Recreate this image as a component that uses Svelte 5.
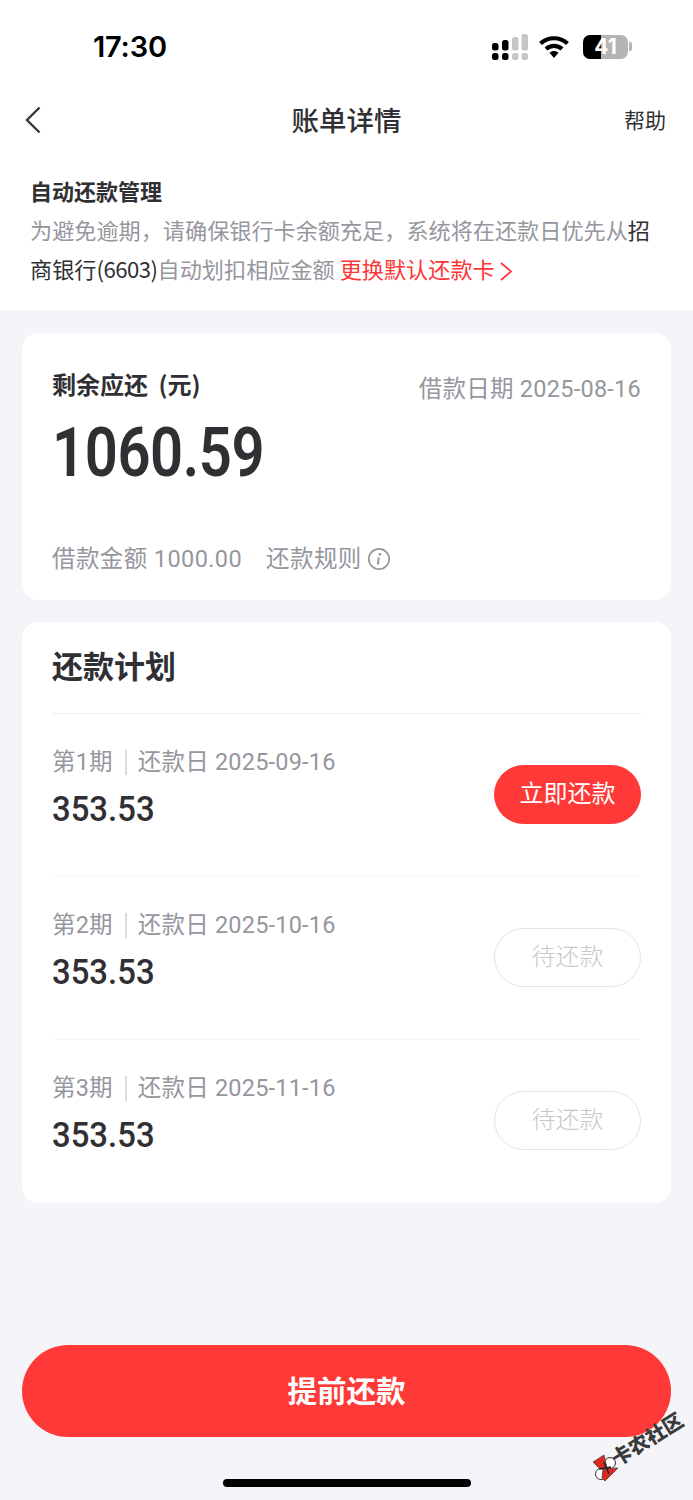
<script>
  const plans = [
    { n: 1, date: '2025-09-16', active: true },
    { n: 2, date: '2025-10-16', active: false },
    { n: 3, date: '2025-11-16', active: false }
  ];
</script>

<div class="page">
  <section class="top">
    <div class="status">
      <span class="time">17:30</span>
      <div class="status-icons">
        <svg width="36" height="26" viewBox="0 0 36 26" class="cell">
          <g fill="#000">
            <rect x="0" y="9" width="6.5" height="7.5" rx="2.5"/>
            <rect x="0" y="19" width="6.5" height="7" rx="2.5"/>
            <rect x="10" y="6" width="6.5" height="10.5" rx="2.5"/>
            <rect x="10" y="19" width="6.5" height="7" rx="2.5"/>
          </g>
          <g fill="#c6c6c6">
            <rect x="20" y="3" width="6.5" height="13.5" rx="2.5"/>
            <rect x="20" y="19" width="6.5" height="7" rx="2.5"/>
            <rect x="29.5" y="0" width="6.5" height="16.5" rx="2.5"/>
            <rect x="29.5" y="19" width="6.5" height="7" rx="2.5"/>
          </g>
        </svg>
        <svg width="32" height="24" viewBox="0 0 32 24" class="wifi">
          <path d="M2.5 8.5C10 1.5 22 1.500 29.500 8.500" fill="none" stroke="#000" stroke-width="4.200"/>
          <path d="M8 14C12.500 9.800 19.500 9.800 24 14" fill="none" stroke="#000" stroke-width="4.200"/>
          <path d="M11.500 17.800C14.200 15.300 17.800 15.300 20.500 17.800L16 23Z" fill="#000"/>
        </svg>
        <div class="battery">
          <span class="level"></span>
          <span class="pct">41</span>
        </div>
        <span class="nub"></span>
      </div>
    </div>

    <header class="nav">
      <svg width="18" height="28" viewBox="0 0 18 28" class="back">
        <path d="M15.500 1.500L3 14L15.500 26.500" fill="none" stroke="#333" stroke-width="2.300"/>
      </svg>
      <h1>账单详情</h1>
      <span class="help">帮助</span>
    </header>

    <div class="notice">
      <div class="notice-title">自动还款管理</div>
      <p class="line">为避免逾期，请确保银行卡余额充足，系统将在还款日优先从<span class="dark">招</span></p>
      <p class="line"><span class="dark">商银行</span><span class="dark card-no">(6603)</span><span>自动划扣相应金额</span> <span class="red">更换默认还款卡</span><svg width="14" height="19" viewBox="0 0 14 19" class="chev"><path d="M2 1L12 9.500L2 18" fill="none" stroke="#ff3535" stroke-width="1.700"/></svg></p>
    </div>
  </section>

  <section class="card summary">
    <div class="summary-head">
      <div class="remain">剩余应还 (元)</div>
      <div class="loan-date">借款日期 2025-08-16</div>
    </div>
    <div class="amount">1060.59</div>
    <div class="summary-foot">
      <span>借款金额 1000.00</span>
      <span class="rule">还款规则
        <svg width="24" height="24" viewBox="0 0 24 24" class="info">
          <circle cx="12" cy="12" r="10.200" fill="none" stroke="#96969e" stroke-width="1.700"/>
          <circle cx="13" cy="7.300" r="1.300" fill="#96969e"/>
          <path d="M11.800 10.500L10.800 17.500" stroke="#96969e" stroke-width="2" fill="none"/>
        </svg>
      </span>
    </div>
  </section>

  <section class="card plan">
    <h2>还款计划</h2>
    {#each plans as p}
      <div class="row">
        <div class="row-text">
          <div class="row-meta">
            <span>第{p.n}期</span><i class="sep"></i><span>还款日 {p.date}</span>
          </div>
          <div class="row-amount">353.53</div>
        </div>
        <span class="pill" class:active={p.active}>{p.active ? '立即还款' : '待还款'}</span>
      </div>
    {/each}
  </section>

  <div class="spacer"></div>
  <button class="prepay">提前还款</button>
  <div class="home"></div>

  <svg class="logo" width="27" height="28" viewBox="0 0 27 28">
    <circle cx="18" cy="9" r="5.500" fill="#fff" stroke="#333" stroke-width="1"/>
    <circle cx="9" cy="20" r="5.500" fill="#fff" stroke="#333" stroke-width="1"/>
    <path d="M1 8L12 1L15 14L8 15Z" fill="#e0261f" stroke="#444" stroke-width=".8"/>
    <path d="M11 15L26 14L13 27L10 24Z" fill="#e0261f" stroke="#444" stroke-width=".8"/>
    <path d="M12 8L17 20M7 15L19 13" stroke="#222" stroke-width="1.500" fill="none"/>
  </svg>
  <span class="mark">卡农社区</span>
</div>

<style>
  :global(body) {
    margin: 0;
    background: #f4f4f9;
  }
  .page {
    position: relative;
    width: 693px;
    height: 1500px;
    overflow: hidden;
    background: #f4f4f9;
    display: flex;
    flex-direction: column;
    align-items: center;
    font-family: "Noto Sans CJK SC", "Noto Sans", sans-serif;
    color: #303034;
  }
  .top {
    width: 100%;
    height: 310px;
    background: #fff;
    flex: none;
    box-sizing: border-box;
  }
  .status {
    height: 92px;
    box-sizing: border-box;
    padding: 27px 61px 0 93px;
    display: flex;
    justify-content: space-between;
  }
  .time {
    font-family: Inter, Roboto, sans-serif;
    font-size: 29px;
    line-height: 40px;
    font-weight: 600;
    color: #000;
    letter-spacing: -0.2px;
  }
  .status-icons {
    display: flex;
    align-items: flex-start;
    padding-top: 7px;
  }
  .cell { margin-right: 10px; }
  .wifi { margin-right: 13px; margin-top: 1px; }
  .battery {
    position: relative;
    width: 45px;
    height: 24px;
    margin-top: 1px;
    border-radius: 7px;
    background: #b4b4b4;
    overflow: hidden;
  }
  .level {
    position: absolute;
    left: 0;
    top: 0;
    bottom: 0;
    width: 18px;
    background: #000;
  }
  .pct {
    position: absolute;
    inset: 0;
    text-align: center;
    color: #fff;
    font-family: Inter, Roboto, sans-serif;
    font-weight: 700;
    font-size: 21px;
    line-height: 24px;
  }
  .nub {
    width: 3px;
    height: 9px;
    margin: 8px 0 0 1px;
    background: #b4b4b4;
    border-radius: 0 2px 2px 0;
  }
  .nav {
    height: 56px;
    position: relative;
    display: flex;
    align-items: center;
    justify-content: center;
  }
  .back {
    position: absolute;
    left: 24px;
    top: 14px;
  }
  h1 {
    margin: -3px 0 0;
    font-size: 27.500px;
    font-weight: 500;
    line-height: 56px;
    color: #303034;
  }
  .help {
    position: absolute;
    right: 27px;
    top: 13px;
    font-size: 21px;
    line-height: 28px;
    font-weight: 400;
    color: #303034;
  }
  .notice {
    padding: 27px 30px 0;
  }
  .notice-title {
    font-size: 22px;
    font-weight: 700;
    line-height: 30px;
    color: #303034;
    margin-bottom: 5px;
  }
  .line {
    margin: 0;
    font-size: 22.150px;
    line-height: 39px;
    color: #96969e;
    white-space: nowrap;
  }
  .dark { color: #303034; }
  .card-no { letter-spacing: -0.500px; }
  .red { color: #ff3535; }
  .chev {
    margin-left: 4px;
    vertical-align: -3px;
  }
  .card {
    flex: none;
    box-sizing: border-box;
    width: 649px;
    background: #fff;
    border-radius: 16px;
  }
  .summary {
    height: 267px;
    margin-top: 23px;
    padding: 33px 30px 0;
    display: flex;
    flex-direction: column;
  }
  .summary-head {
    display: flex;
    justify-content: space-between;
    align-items: flex-start;
  }
  .remain {
    font-size: 24px;
    line-height: 36px;
    font-weight: 700;
    word-spacing: 5px;
    color: #303034;
  }
  .loan-date {
    font-size: 23.500px;
    line-height: 40px;
    margin-top: 3px;
    color: #96969e;
    font-family: Roboto, "Noto Sans CJK SC", sans-serif;
    letter-spacing: 0.250px;
  }
  .amount {
    font-family: Roboto, sans-serif;
    font-weight: 600;
    font-size: 69px;
    line-height: 74px;
    margin-top: 7px;
    color: #303034;
    letter-spacing: -0.500px;
    transform: scaleX(0.84);
    transform-origin: left center;
  }
  .summary-foot {
    margin-top: 49px;
    display: flex;
    gap: 24px;
    font-family: Roboto, "Noto Sans CJK SC", sans-serif;
    font-size: 23.500px;
    line-height: 40px;
    color: #96969e;
    letter-spacing: 0.400px;
  }
  .rule {
    display: flex;
    align-items: center;
    gap: 5px;
  }
  .plan {
    height: 581px;
    margin-top: 22px;
    padding: 0 30px;
  }
  h2 {
    margin: 0;
    height: 92px;
    box-sizing: border-box;
    padding-top: 21px;
    font-size: 31px;
    line-height: 44px;
    font-weight: 700;
    color: #303034;
    border-bottom: 1px solid #efeff2;
  }
  .row {
    height: 163px;
    box-sizing: border-box;
    display: flex;
    justify-content: space-between;
    align-items: flex-start;
    border-bottom: 1px solid #f8f8fa;
    padding-top: 30px;
  }
  .row:last-child { border-bottom: 0; }
  .row-meta {
    display: flex;
    align-items: center;
    font-family: Roboto, "Noto Sans CJK SC", sans-serif;
    font-size: 23.500px;
    line-height: 36px;
    color: #96969e;
    letter-spacing: 0.200px;
  }
  .sep {
    width: 2px;
    height: 25px;
    background: #dcdce0;
    margin: 0 11px 0 12px;
  }
  .row-amount {
    font-family: Roboto, sans-serif;
    font-weight: 500;
    font-size: 34.500px;
    line-height: 46px;
    margin-top: 6px;
    color: #303034;
    transform: scaleX(0.953);
    transform-origin: left center;
  }
  .pill {
    box-sizing: border-box;
    width: 147px;
    height: 59px;
    margin-top: 21px;
    border-radius: 30px;
    border: 1px solid #e4e4e6;
    color: #c8c8cc;
    font-size: 24px;
    line-height: 51px;
    text-align: center;
    font-weight: 300;
  }
  .pill.active {
    background: #ff3838;
    border-color: #ff3838;
    color: #fff;
    font-weight: 400;
  }
  .spacer { height: 142px; flex: none; }
  .prepay {
    flex: none;
    width: 649px;
    height: 92px;
    border: 0;
    border-radius: 46px;
    background: #ff3838;
    color: #fff;
    font-family: inherit;
    font-size: 29.500px;
    font-weight: 700;
    padding: 0 0 4px;
  }
  .home {
    flex: none;
    width: 248px;
    height: 8px;
    margin-top: 42px;
    border-radius: 4px;
    background: #000;
  }
  .logo {
    position: absolute;
    left: 592px;
    top: 1454px;
  }
  .mark {
    position: absolute;
    left: 613px;
    top: 1448px;
    transform: rotate(-32deg);
    transform-origin: left center;
    color: #3a3a3a;
    font-size: 20px;
    font-weight: 900;
    line-height: 24px;
    white-space: nowrap;
  }
</style>
